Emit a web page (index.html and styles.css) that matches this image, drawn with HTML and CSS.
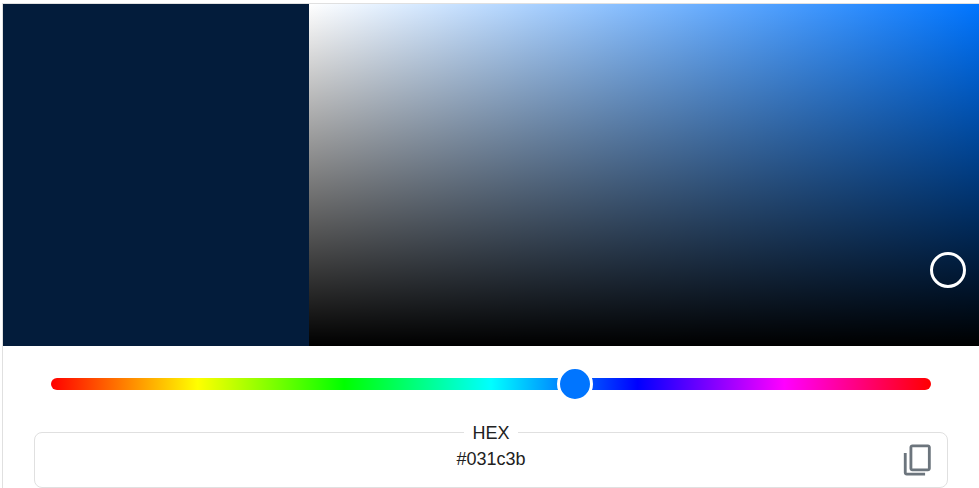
FILE: index.html
```html
<!DOCTYPE html>
<html lang="en">
<head>
<meta charset="UTF-8">
<title>Color picker</title>
<link rel="stylesheet" href="styles.css">
</head>
<body>
<div class="card">
    <div class="picker">
        <div class="preview"></div>
        <div class="saturation">
            <div class="cursor"></div>
        </div>
    </div>
    <div class="controls">
        <div class="hue">
            <div class="hue-thumb"></div>
        </div>
        <fieldset class="hex">
            <legend>HEX</legend>
            <span class="hex-value">#031c3b</span>
            <button class="copy-btn" aria-label="Copy">
                <svg viewBox="0 0 24 24" width="34" height="34"><path d="M8 1h11c1.100 0 2 .9 2 2v15c0 1.100-.9 2-2 2H8c-1.100 0-2-.9-2-2V3c0-1.100.9-2 2-2zm0 2v15h11V3H8zM2 7h2v14h13v2H4c-1.100 0-2-.9-2-2V7z"/></svg>
            </button>
        </fieldset>
    </div>
</div>
</body>
</html>
```

FILE: styles.css
```css
html, body {
    margin: 0;
    height: 488px;
    overflow: hidden;
    background: #fff;
    font-family: "Liberation Sans", Arial, sans-serif;
    color: #212121;
}
.card {
    box-sizing: border-box;
    width: 978px;
    height: 485px;
    margin: 3px 0 0 2px;
    border: 1px solid #e0e0e0;
    border-bottom: none;
}
.picker {
    display: flex;
    height: 342px;
}
.preview {
    width: 306px;
    background: #031c3b;
}
.saturation {
    flex: 1;
    position: relative;
    background:
        linear-gradient(to top, #000, transparent),
        linear-gradient(to right, #fff, #0075ff);
}
.cursor {
    position: absolute;
    left: 621px;
    top: 248px;
    box-sizing: border-box;
    width: 36px;
    height: 36px;
    border: 3px solid #fff;
    border-radius: 50%;
}
.controls {
    padding: 32px 31px 0;
}
.hue {
    position: relative;
    height: 12px;
    margin: 0 17px 31px;
    border-radius: 6px;
    background: linear-gradient(to right, #f00, #ff0, #0f0, #0ff, #00f, #f0f, #f00);
}
.hue-thumb {
    position: absolute;
    left: 506px;
    top: -12px;
    box-sizing: border-box;
    width: 36px;
    height: 36px;
    border: 3px solid #fff;
    border-radius: 50%;
    background: #0075ff;
}
.hex {
    position: relative;
    margin: 0;
    padding: 5px 0 0;
    height: 67px;
    box-sizing: border-box;
    border: 1px solid #e0e0e0;
    border-radius: 8px;
    text-align: center;
    font-size: 18px;
}
.hex legend {
    margin: 0 auto;
    padding: 2px 8px 0;
}
.hex-value {
    display: block;
    line-height: 20px;
}
.copy-btn {
    position: absolute;
    right: 12px;
    top: -1px;
    padding: 0;
    border: none;
    background: none;
    fill: #6c757d;
}
```
